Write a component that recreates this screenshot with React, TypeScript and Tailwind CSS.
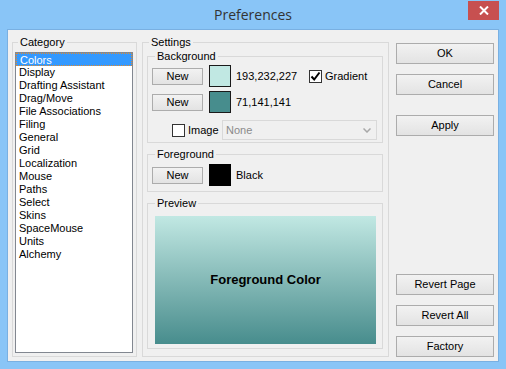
import React from "react";

const font = { fontFamily: '"Liberation Sans", Arial, sans-serif' };

function Btn({ children, className = "" }: { children: React.ReactNode; className?: string }) {
  return (
    <div
      className={
        "flex items-center justify-center border border-[#acacac] bg-linear-to-b from-[#f2f2f2] to-[#e3e3e3] text-[11px] leading-none text-black " +
        className
      }
    >
      {children}
    </div>
  );
}

function Check({ checked }: { checked?: boolean }) {
  return (
    <div className="flex h-[13px] w-[13px] shrink-0 items-center justify-center border border-[#333333] bg-white">
      {checked && (
        <svg width="11" height="11" viewBox="0 0 11 11">
          <path d="M1.5 5.5 L4.2 8.5 L9.5 1.5" fill="none" stroke="#000" strokeWidth="2" />
        </svg>
      )}
    </div>
  );
}

const items = [
  "Colors",
  "Display",
  "Drafting Assistant",
  "Drag/Move",
  "File Associations",
  "Filing",
  "General",
  "Grid",
  "Localization",
  "Mouse",
  "Paths",
  "Select",
  "Skins",
  "SpaceMouse",
  "Units",
  "Alchemy",
];

export default function App() {
  return (
    <div className="h-[369px] w-[506px] overflow-hidden bg-[#89c5f7]" style={font}>
      {/* title bar */}
      <div className="relative flex h-[29px] items-center justify-center">
        <span
          className="text-[14px] text-[#333333]"
          style={{ fontFamily: '"Open Sans", "Noto Sans", sans-serif' }}
        >
          Preferences
        </span>
        <div className="absolute right-[7px] top-[1px] flex h-[19px] w-[31px] items-center justify-center bg-[#c75050]">
          <svg width="10" height="9" viewBox="0 0 10 9">
            <path d="M1 0.5 L9 8.5 M9 0.5 L1 8.5" stroke="#fff" strokeWidth="2" />
          </svg>
        </div>
      </div>

      {/* client */}
      <div className="ml-[7px] h-[333px] w-[492px] border border-[#79b0e2] bg-[#f0f0f0]">
        <div className="flex pl-[4px] pt-[6px] text-[11px] text-black">
          {/* Category */}
          <fieldset className="h-[321px] w-[125px] border border-[#d9d9d9]">
            <legend className="ml-[5px] px-[2px] leading-[13px]">Category</legend>
            <div className="ml-[2px] mt-[3px] h-[301px] w-[118px] border border-[#828790] bg-white">
              {items.map((it, i) => (
                <div
                  key={it}
                  className={
                    "h-[13px] pl-[3px] leading-[13px] " +
                    (i === 0 ? "border border-dotted border-[#e08a2e] bg-[#3399ff] pl-[2px] leading-[11px] text-white" : "")
                  }
                >
                  {it}
                </div>
              ))}
            </div>
          </fieldset>

          {/* Settings */}
          <fieldset className="ml-[5px] h-[321px] w-[247px] border border-[#d9d9d9]">
            <legend className="ml-[6px] px-[2px] leading-[13px]">Settings</legend>

            {/* Background */}
            <fieldset className="ml-[4px] mt-[1px] w-[236px] border border-[#d9d9d9] pb-[2px] pl-[4px]">
              <legend className="ml-[3px] px-[2px] leading-[13px]">Background</legend>
              <div className="mt-[2px] flex h-[22px] items-center">
                <Btn className="h-[17px] w-[51px]">New</Btn>
                <div className="ml-[6px] h-[22px] w-[22px] border border-[#1a1a1a] bg-[#c1e8e3]" />
                <span className="ml-[5px] w-[73px]">193,232,227</span>
                <Check checked />
                <span className="ml-[3px]">Gradient</span>
              </div>
              <div className="mt-[4px] flex h-[22px] items-center">
                <Btn className="h-[17px] w-[51px]">New</Btn>
                <div className="ml-[6px] h-[22px] w-[22px] border border-[#1a1a1a] bg-[#478d8d]" />
                <span className="ml-[5px]">71,141,141</span>
              </div>
              <div className="mt-[7px] flex h-[20px] items-center">
                <div className="ml-[20px]">
                  <Check />
                </div>
                <span className="ml-[3px] w-[34px]">Image</span>
                <div className="flex h-[20px] w-[155px] items-center justify-between border border-[#d9d9d9] bg-[#f0f0f0] pl-[3px] pr-[5px] text-[#8a8a8a]">
                  <span>None</span>
                  <svg width="8" height="5" viewBox="0 0 8 5">
                    <path d="M0.5 0.5 L4 4 L7.5 0.5" fill="none" stroke="#a8a8a8" strokeWidth="1.5" />
                  </svg>
                </div>
              </div>
            </fieldset>

            {/* Foreground */}
            <fieldset className="ml-[4px] mt-[5px] w-[236px] border border-[#d9d9d9] pb-[5px] pl-[4px]">
              <legend className="ml-[3px] px-[2px] leading-[13px]">Foreground</legend>
              <div className="mt-[3px] flex h-[22px] items-center">
                <Btn className="h-[17px] w-[51px]">New</Btn>
                <div className="ml-[6px] h-[22px] w-[22px] bg-black" />
                <span className="ml-[5px]">Black</span>
              </div>
            </fieldset>

            {/* Preview */}
            <fieldset className="ml-[4px] mt-[5px] w-[236px] border border-[#d9d9d9] pb-[4px] pl-[7px]">
              <legend className="ml-[0px] px-[2px] leading-[13px]">Preview</legend>
              <div className="mt-[6px] flex h-[128px] w-[221px] items-center justify-center bg-linear-to-b from-[#c1e8e3] to-[#478d8d]">
                <span className="text-[13px] font-bold text-black">Foreground Color</span>
              </div>
            </fieldset>
          </fieldset>

          {/* Buttons */}
          <div className="ml-[7px] flex h-[321px] w-[98px] flex-col pt-[7px]">
            <Btn className="h-[21px]">OK</Btn>
            <Btn className="mt-[10px] h-[21px]">Cancel</Btn>
            <Btn className="mt-[20px] h-[21px]">Apply</Btn>
            <div className="flex-1" />
            <Btn className="h-[21px]">Revert Page</Btn>
            <Btn className="mt-[10px] h-[21px]">Revert All</Btn>
            <Btn className="mt-[10px] h-[21px]">Factory</Btn>
          </div>
        </div>
      </div>
    </div>
  );
}
